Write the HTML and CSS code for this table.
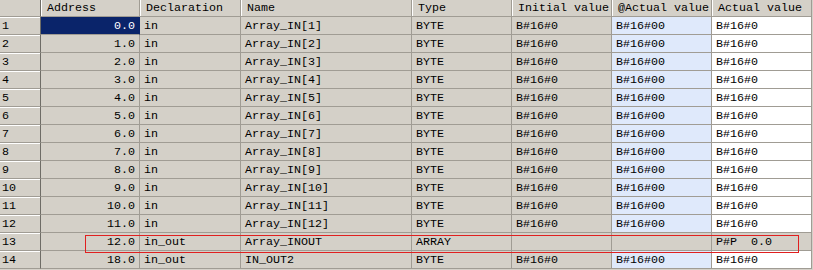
FILE: index.html
```html
<!DOCTYPE html>
<html>
<head>
<meta charset="utf-8">
<link rel="stylesheet" href="styles.css">
</head>
<body>
<div class="grid">
  <div class="row head">
    <div class="c rh"></div>
    <div class="c">Address</div>
    <div class="c">Declaration</div>
    <div class="c">Name</div>
    <div class="c">Type</div>
    <div class="c">Initial value</div>
    <div class="c">@Actual value</div>
    <div class="c">Actual value</div>
  </div>
  <div class="row"><div class="c rh">1</div><div class="c addr sel">0.0</div><div class="c">in</div><div class="c">Array_IN[1]</div><div class="c">BYTE</div><div class="c">B#16#0</div><div class="c blue">B#16#00</div><div class="c white">B#16#0</div></div>
  <div class="row"><div class="c rh">2</div><div class="c addr">1.0</div><div class="c">in</div><div class="c">Array_IN[2]</div><div class="c">BYTE</div><div class="c">B#16#0</div><div class="c blue">B#16#00</div><div class="c white">B#16#0</div></div>
  <div class="row"><div class="c rh">3</div><div class="c addr">2.0</div><div class="c">in</div><div class="c">Array_IN[3]</div><div class="c">BYTE</div><div class="c">B#16#0</div><div class="c blue">B#16#00</div><div class="c white">B#16#0</div></div>
  <div class="row"><div class="c rh">4</div><div class="c addr">3.0</div><div class="c">in</div><div class="c">Array_IN[4]</div><div class="c">BYTE</div><div class="c">B#16#0</div><div class="c blue">B#16#00</div><div class="c white">B#16#0</div></div>
  <div class="row"><div class="c rh">5</div><div class="c addr">4.0</div><div class="c">in</div><div class="c">Array_IN[5]</div><div class="c">BYTE</div><div class="c">B#16#0</div><div class="c blue">B#16#00</div><div class="c white">B#16#0</div></div>
  <div class="row"><div class="c rh">6</div><div class="c addr">5.0</div><div class="c">in</div><div class="c">Array_IN[6]</div><div class="c">BYTE</div><div class="c">B#16#0</div><div class="c blue">B#16#00</div><div class="c white">B#16#0</div></div>
  <div class="row"><div class="c rh">7</div><div class="c addr">6.0</div><div class="c">in</div><div class="c">Array_IN[7]</div><div class="c">BYTE</div><div class="c">B#16#0</div><div class="c blue">B#16#00</div><div class="c white">B#16#0</div></div>
  <div class="row"><div class="c rh">8</div><div class="c addr">7.0</div><div class="c">in</div><div class="c">Array_IN[8]</div><div class="c">BYTE</div><div class="c">B#16#0</div><div class="c blue">B#16#00</div><div class="c white">B#16#0</div></div>
  <div class="row"><div class="c rh">9</div><div class="c addr">8.0</div><div class="c">in</div><div class="c">Array_IN[9]</div><div class="c">BYTE</div><div class="c">B#16#0</div><div class="c blue">B#16#00</div><div class="c white">B#16#0</div></div>
  <div class="row"><div class="c rh">10</div><div class="c addr">9.0</div><div class="c">in</div><div class="c">Array_IN[10]</div><div class="c">BYTE</div><div class="c">B#16#0</div><div class="c blue">B#16#00</div><div class="c white">B#16#0</div></div>
  <div class="row"><div class="c rh">11</div><div class="c addr">10.0</div><div class="c">in</div><div class="c">Array_IN[11]</div><div class="c">BYTE</div><div class="c">B#16#0</div><div class="c blue">B#16#00</div><div class="c white">B#16#0</div></div>
  <div class="row"><div class="c rh">12</div><div class="c addr">11.0</div><div class="c">in</div><div class="c">Array_IN[12]</div><div class="c">BYTE</div><div class="c">B#16#0</div><div class="c blue">B#16#00</div><div class="c white">B#16#0</div></div>
  <div class="row"><div class="c rh">13</div><div class="c addr">12.0</div><div class="c">in_out</div><div class="c">Array_INOUT</div><div class="c">ARRAY</div><div class="c"></div><div class="c"></div><div class="c pre">P#P  0.0</div></div>
  <div class="row"><div class="c rh">14</div><div class="c addr">18.0</div><div class="c">in_out</div><div class="c">IN_OUT2</div><div class="c">BYTE</div><div class="c">B#16#0</div><div class="c blue">B#16#00</div><div class="c white">B#16#0</div></div>
  <div class="mark"></div>
</div>
</body>
</html>
```
FILE: styles.css
```css
html, body {
  margin: 0;
  padding: 0;
  background: #d4d0c8;
}
.grid {
  position: relative;
  width: 813px;
  font-family: "Liberation Mono", "DejaVu Sans Mono", monospace;
  font-size: 11.67px;
  color: #000;
}
.row {
  display: grid;
  grid-template-columns: 41px 99px 101px 171px 100px 100px 100px 100px;
  height: 18px;
}
.c {
  box-sizing: border-box;
  height: 18px;
  border-right: 1px solid #a09c94;
  border-bottom: 1px solid #a09c94;
  padding: 2px 4px 0;
  line-height: 15px;
  white-space: pre;
  overflow: hidden;
  background: #d4d0c8;
}
.head {
  height: 17px;
}
.head .c {
  height: 17px;
  line-height: 15px;
  padding-top: 1px;
  padding-left: 6px;
  border-right: 1px solid #a09c94;
  border-bottom: 1px solid #a09c94;
  box-shadow: inset 1px 0 0 #ffffff;
}
.head .c.rh {
  box-shadow: none;
}
.c.rh {
  padding-left: 2px;
  border-right: 1px solid #6e6c66;
  box-shadow: inset 0 1px 0 #ffffff;
}
.head .c:nth-child(2) {
  box-shadow: inset 1px 0 0 #ffffff;
}
.addr {
  text-align: right;
  padding-right: 4px;
}
.sel {
  background: #0a246a;
  color: #ffffff;
  border-right: 1px solid #0a246a;
  border-bottom: 1px solid #a09c94;
}
.blue {
  background: #dfe9fb;
}
.white {
  background: #ffffff;
}
.mark {
  position: absolute;
  left: 85px;
  top: 235px;
  width: 714px;
  height: 18px;
  border: 1px solid #e02020;
  box-sizing: border-box;
}
```
